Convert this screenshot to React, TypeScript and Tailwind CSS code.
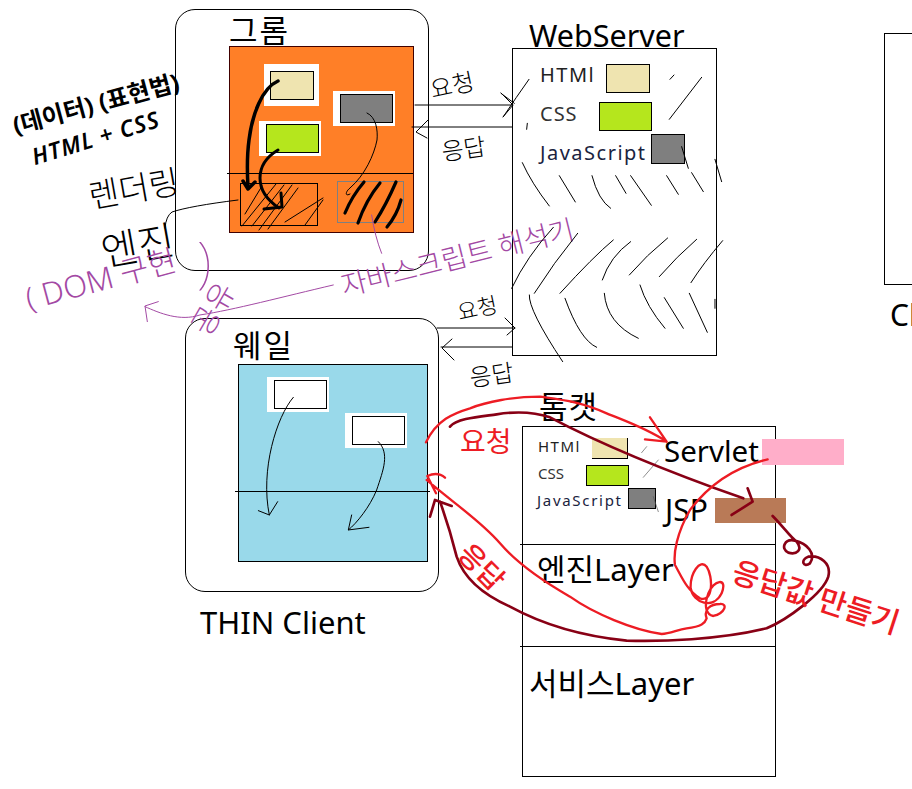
import React from 'react'

const RED = '#ED1C24'
const MAROON = '#880015'
const PURPLE = '#A349A4'

const serverHatch = [
  'M327 238 Q290 290 250 350', 'M243 280 L283 310', 'M750 238 L762 225', 'M845 232 L748 358', 'M322 370 L320 388',
  'M307 488 Q335 550 388 618', 'M418 527 L466 606', 'M516 527 Q535 600 572 625', 'M587 527 L618 580',
  'M632 527 L694 616', 'M740 527 L775 583', 'M815 518 L850 575', 'M885 478 L905 545', 'M785 440 L805 505',
  'M275 865 Q320 770 400 682', 'M343 880 Q400 790 473 700', 'M420 880 Q520 770 580 720', 'M547 840 Q570 770 632 725',
  'M628 825 Q680 765 743 714', 'M718 830 Q770 770 830 718', 'M813 848 Q850 790 908 722',
  'M328 885 Q325 930 428 1085', 'M435 895 Q480 1020 530 1042', 'M553 880 Q560 970 655 1015',
  'M660 855 Q680 920 735 985', 'M733 893 L790 985', 'M808 880 L862 997', 'M885 898 L885 925',
]

const Strokes: React.FC = () => (
  <svg className="absolute left-0 top-0 z-10" width="912" height="789" fill="none" strokeLinecap="round" strokeLinejoin="round">
    {/* chrome box */}
    <g stroke="#000">
      <path d="M278 81 C262 88 252 115 249 140 C247 155 247 170 248 187" strokeWidth="3.5" />
      <path d="M243 181 L248 189 L255 182" strokeWidth="3.5" />
      <path d="M278 150 C268 156 260 165 260 178 C260 192 270 202 279 208" strokeWidth="3" />
      <path d="M264 209 L282 207 L281 193" strokeWidth="3" />
      <path d="M367 113 C376 117 378 130 377 140 C374 155 365 175 350 188 C345 192 345 197 350 194" strokeWidth="1" />
      <path d="M345 213 Q352 196 364 182 M358 223 Q366 200 380 183 M375 222 Q386 205 396 182 M387 227 Q397 215 401 200" strokeWidth="3.2" />
      <path d="M245 214 L262 186 M242 226 L276 184 M252 226 L284 185 M259 230 L292 185 M268 229 L298 188 M285 222 L323 198 M305 225 L323 200" strokeWidth="1" />
      <path d="M238 200 Q190 206 172 212 Q166 216 165 228" strokeWidth="1" />
      <path d="M415 105 L513 105 M501 93 L513 105 L503 117 M412 127 L512 127 M428 120 L416 132 L427 138" strokeWidth="1" />
      <path d="M437 328 L515 328 M505 318 L515 328 L507 335 M441 347 L512 347 M452 339 L442 348 L454 360" strokeWidth="1" />
    </g>

    {/* web server hatching */}
    <g transform="translate(420 0) scale(0.3333)" stroke="#000" strokeWidth="3">
      {serverHatch.map((d) => <path key={d} d={d} />)}
    </g>

    {/* whale arrows */}
    <g transform="translate(170 310) scale(0.3333)" stroke="#000" strokeWidth="3">
      <path d="M370 262 C320 320 270 480 298 615 M265 602 L298 615 L323 575" />
      <path d="M625 395 C660 430 640 480 620 540 C600 590 560 640 535 660 M545 615 L535 660 L597 652" />
    </g>

    {/* tomcat request / response */}
    <g transform="translate(420 380) scale(0.3333)">
      <path d="M680 200 L665 218 M715 240 L670 292 M700 350 L715 395" stroke="#555" strokeWidth="2" />
      <path d="M18 187 C50 120 100 100 150 85 C200 65 280 50 360 50 C430 60 480 65 560 100 C620 125 680 145 740 185 M690 112 L740 185 L675 178" stroke={RED} strokeWidth="7" />
      <path d="M90 140 C110 115 180 110 230 103 C280 95 340 95 390 112 C500 170 700 260 970 355 M983 325 L998 365 L935 405" stroke={MAROON} strokeWidth="8" />
      <path d="M1043 238 C950 260 870 310 810 390 C770 460 760 520 765 555 C785 590 800 630 840 655 C880 670 880 590 860 560 C840 535 810 580 812 625 C820 670 880 690 905 640 C925 590 880 600 865 640 C850 680 860 705 880 708 C915 700 925 670 900 672 C870 672 850 690 860 715 C855 730 845 740 800 745 C770 750 750 762 725 762 C640 750 520 700 450 650 C380 610 300 560 240 490 C180 420 100 370 20 300 M75 293 C60 280 40 280 22 288 L48 340" stroke={RED} strokeWidth="7" />
      <path d="M1058 408 C1090 440 1110 470 1130 485 C1150 510 1130 525 1105 518 C1080 505 1095 475 1125 482 C1160 490 1190 520 1170 550 C1150 565 1140 540 1165 530 C1200 525 1235 550 1225 590 C1210 640 1100 720 1040 745 C900 780 720 785 620 782 C500 770 380 740 270 680 C180 640 130 590 110 530 C95 470 80 420 60 365 M30 410 L45 360 L95 378" stroke={MAROON} strokeWidth="8" />
    </g>

    {/* purple arrow */}
    <g transform="scale(0.3333)" stroke={PURPLE} strokeWidth="3">
      <path d="M1000 855 C850 890 700 930 600 945 C540 965 480 940 435 920 M475 905 L435 918 L442 965" />
      <path d="M1115 645 Q1125 710 1145 760" />
    </g>
  </svg>
)

const App: React.FC = () => {
  return (
    <div className="relative w-[912px] h-[789px] overflow-hidden bg-white text-black leading-none whitespace-nowrap font-['Noto_Sans','Noto_Sans_CJK_KR',sans-serif]">
      {/* chrome */}
      <div className="absolute left-[175px] top-[9px] w-[254px] h-[262px] rounded-[20px] border border-black"></div>
      <div className="absolute left-[229px] top-[15px] text-[31px] tracking-[2px]">그롬</div>
      <div className="absolute left-[229px] top-[46px] w-[185px] h-[187px] bg-[#FF7F27] border border-[#400000]"></div>
      <div className="absolute left-[264px] top-[64px] w-[55px] h-[42px] bg-white p-0 flex items-center justify-center">
        <div className="w-[44px] h-[29px] bg-[#EFE4B0] border border-black"></div>
      </div>
      <div className="absolute left-[333px] top-[91px] w-[62px] h-[35px] bg-white flex items-center justify-end pr-[2px]">
        <div className="w-[53px] h-[29px] bg-[#7F7F7F] border border-black"></div>
      </div>
      <div className="absolute left-[259px] top-[121px] w-[62px] h-[35px] bg-white flex items-center justify-end pr-[2px]">
        <div className="w-[53px] h-[29px] bg-[#B5E61D] border border-black"></div>
      </div>
      <div className="absolute left-[227px] top-[173px] w-[186px] h-px bg-black"></div>
      <div className="absolute left-[240px] top-[183px] w-[78px] h-[43px] border border-black"></div>
      <div className="absolute left-[337px] top-[181px] w-[67px] h-[42px] border border-[#7F7F7F]"></div>

      {/* web server */}
      <div className="absolute left-[529px] top-[20px] text-[30.5px]">WebServer</div>
      <div className="absolute left-[512px] top-[48px] w-[205px] h-[308px] border border-black"></div>
      <div className="absolute left-[540px] top-[65px] text-[20px] tracking-[1.5px] text-[#222]">HTMl</div>
      <div className="absolute left-[606px] top-[64px] w-[44px] h-[29px] bg-[#EFE4B0] border border-black"></div>
      <div className="absolute left-[540px] top-[104px] text-[20px] tracking-[1px] text-[#333]">CSS</div>
      <div className="absolute left-[599px] top-[102px] w-[53px] h-[29px] bg-[#B5E61D] border border-black"></div>
      <div className="absolute left-[540px] top-[143px] text-[20px] tracking-[1.5px] text-[#1a2340]">JavaScript</div>
      <div className="absolute left-[651px] top-[134px] w-[34px] h-[30px] bg-[#7F7F7F] border border-black"></div>

      {/* right box, cut off by the window */}
      <div className="absolute left-[884px] top-[33px] w-[60px] h-[252px] border border-black"></div>
      <div className="absolute left-[890px] top-[300px] text-[30px]">Client</div>

      {/* whale */}
      <div className="absolute left-[185px] top-[318px] w-[254px] h-[274px] rounded-[20px] border border-black"></div>
      <div className="absolute left-[233px] top-[330px] text-[31px] tracking-[2px]">웨일</div>
      <div className="absolute left-[238px] top-[364px] w-[190px] h-[198px] bg-[#99D9EA] border border-black"></div>
      <div className="absolute left-[267px] top-[377px] w-[62px] h-[35px] bg-white flex items-center justify-end pr-[2px]">
        <div className="w-[53px] h-[29px] bg-white border border-black"></div>
      </div>
      <div className="absolute left-[345px] top-[413px] w-[62px] h-[35px] bg-white flex items-center justify-end pr-[2px]">
        <div className="w-[53px] h-[29px] bg-white border border-black"></div>
      </div>
      <div className="absolute left-[235px] top-[491px] w-[195px] h-px bg-black"></div>
      <div className="absolute left-[200px] top-[607px] text-[31px]">THIN Client</div>

      {/* tomcat */}
      <div className="absolute left-[539px] top-[391px] text-[31px] tracking-[1px]">톰캣</div>
      <div className="absolute left-[522px] top-[426px] w-[254px] h-[351px] border border-black"></div>
      <div className="absolute left-[520px] top-[544px] w-[256px] h-px bg-black"></div>
      <div className="absolute left-[520px] top-[646px] w-[256px] h-px bg-black"></div>
      <div className="absolute left-[538px] top-[439px] text-[15px] tracking-[1.5px] text-[#222]">HTMl</div>
      <div className="absolute left-[592px] top-[438px] w-[36px] h-[21px] bg-[#EFE4B0] border-r border-b border-black"></div>
      <div className="absolute left-[538px] top-[466px] text-[15px] text-[#333]">CSS</div>
      <div className="absolute left-[586px] top-[465px] w-[43px] h-[21px] bg-[#B5E61D] border border-black"></div>
      <div className="absolute left-[537px] top-[493px] text-[15px] tracking-[1.7px] text-[#1a2340]">JavaScript</div>
      <div className="absolute left-[628px] top-[488px] w-[28px] h-[21px] bg-[#7F7F7F] border border-black"></div>
      <div className="absolute left-[664px] top-[436px] text-[29.5px]">Servlet</div>
      <div className="absolute left-[762px] top-[439px] w-[82px] h-[26px] bg-[#FFAEC9]"></div>
      <div className="absolute left-[665px] top-[495px] text-[30px]">JSP</div>
      <div className="absolute left-[715px] top-[498px] w-[71px] h-[25px] bg-[#B97A57]"></div>
      <div className="absolute left-[537px] top-[554px] text-[31px]">엔진Layer</div>
      <div className="absolute left-[529px] top-[668px] text-[31px]">서비스Layer</div>

      {/* handwritten notes */}
      <div className="absolute left-[10px] top-[114px] -rotate-[15deg] text-[24px] font-bold origin-top-left">(데이터) (표현법)</div>
      <div className="absolute left-[29px] top-[146px] -rotate-[17deg] text-[23px] font-semibold italic origin-top-left tracking-[1px]">HTML + CSS</div>
      <div className="absolute left-[86px] top-[180px] -rotate-[10deg] text-[33px] font-light origin-top-left">렌더링</div>
      <div className="absolute left-[98px] top-[232px] -rotate-[10deg] text-[40px] font-light origin-top-left">엔진</div>
      <div className="absolute left-[22px] top-[284px] -rotate-[15deg] text-[31px] font-light text-[#A349A4] origin-top-left">( DOM 구현</div>
      <div className="absolute left-[197px] top-[232px] text-[56px] font-thin text-[#A349A4]">)</div>
      <div className="absolute left-[186px] top-[325px] -rotate-[60deg] text-[30px] font-light text-[#A349A4] origin-top-left">공유</div>
      <div className="absolute left-[338px] top-[272px] -rotate-[14deg] text-[28px] font-light text-[#A349A4] origin-top-left">자바스크립트 해석기</div>
      <div className="absolute left-[428px] top-[78px] -rotate-[12deg] text-[24px] font-light origin-top-left">요청</div>
      <div className="absolute left-[440px] top-[140px] -rotate-[8deg] text-[24px] font-light origin-top-left">응답</div>
      <div className="absolute left-[455px] top-[301px] -rotate-[12deg] text-[22px] font-light origin-top-left">요청</div>
      <div className="absolute left-[468px] top-[366px] -rotate-[8deg] text-[24px] font-light origin-top-left">응답</div>
      <div className="absolute left-[460px] top-[427px] text-[28px] text-[#ED1C24]">요청</div>
      <div className="absolute left-[474px] top-[538px] rotate-[45deg] text-[28px] font-medium text-[#ED1C24] origin-top-left z-20">응답</div>
      <div className="absolute left-[738px] top-[556px] rotate-[18deg] text-[30px] font-medium text-[#ED1C24] origin-top-left z-20">응답값 만들기</div>

      <Strokes />
    </div>
  )
}

export default App
